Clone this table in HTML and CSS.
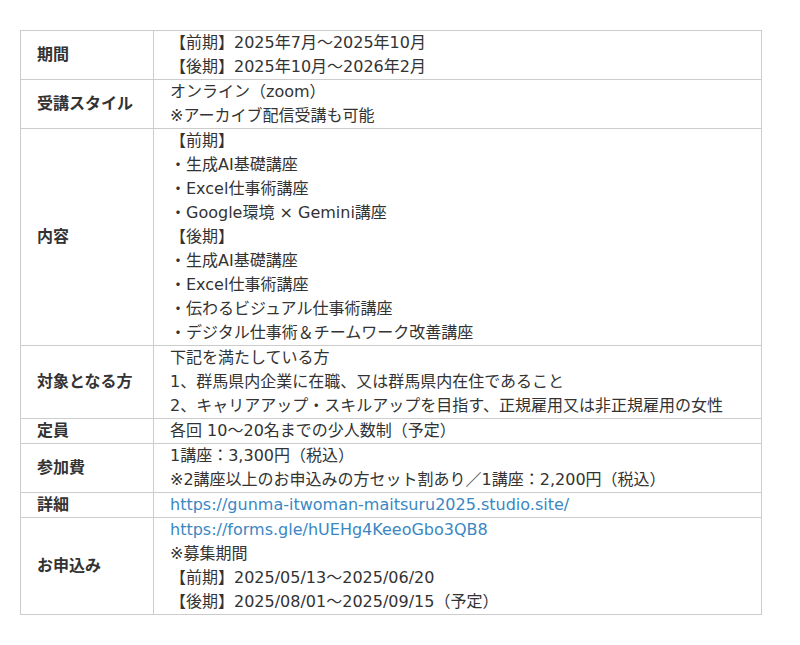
FILE: index.html
```html
<!DOCTYPE html>
<html lang="ja">
<head>
<meta charset="utf-8">
<link rel="stylesheet" href="styles.css">
</head>
<body>
<table class="info">
  <tr><th>期間</th><td>【前期】2025年7月〜2025年10月<br>【後期】2025年10月〜2026年2月</td></tr>
  <tr><th>受講スタイル</th><td>オンライン（zoom）<br>※アーカイブ配信受講も可能</td></tr>
  <tr><th>内容</th><td>【前期】<br>・生成AI基礎講座<br>・Excel仕事術講座<br>・Google環境 × Gemini講座<br>【後期】<br>・生成AI基礎講座<br>・Excel仕事術講座<br>・伝わるビジュアル仕事術講座<br>・デジタル仕事術＆チームワーク改善講座</td></tr>
  <tr><th>対象となる方</th><td>下記を満たしている方<br>1、群馬県内企業に在職、又は群馬県内在住であること<br>2、キャリアアップ・スキルアップを目指す、正規雇用又は非正規雇用の女性</td></tr>
  <tr><th>定員</th><td>各回 10〜20名までの少人数制（予定）</td></tr>
  <tr><th>参加費</th><td>1講座：3,300円（税込）<br>※2講座以上のお申込みの方セット割あり／1講座：2,200円（税込）</td></tr>
  <tr><th>詳細</th><td><a href="#">https://gunma-itwoman-maitsuru2025.studio.site/</a></td></tr>
  <tr><th>お申込み</th><td><a href="#">https://forms.gle/hUEHg4KeeoGbo3QB8</a><br>※募集期間<br>【前期】2025/05/13〜2025/06/20<br>【後期】2025/08/01〜2025/09/15（予定）</td></tr>
</table>
</body>
</html>
```
FILE: styles.css
```css
body {
  margin: 0;
  padding: 30px 20px;
  background: #fff;
  font-family: "DejaVu Sans", "Noto Sans CJK JP", sans-serif;
  font-size: 16px;
  color: #333;
}
.info {
  width: 742px;
  border-collapse: collapse;
  line-height: 24px;
}
.info th, .info td {
  border: 1px solid #ccc;
  padding: 0 16px;
  text-align: left;
  vertical-align: middle;
}
.info th {
  width: 100px;
  font-weight: bold;
}
.info a {
  color: #3a87c3;
  text-decoration: none;
}
```
